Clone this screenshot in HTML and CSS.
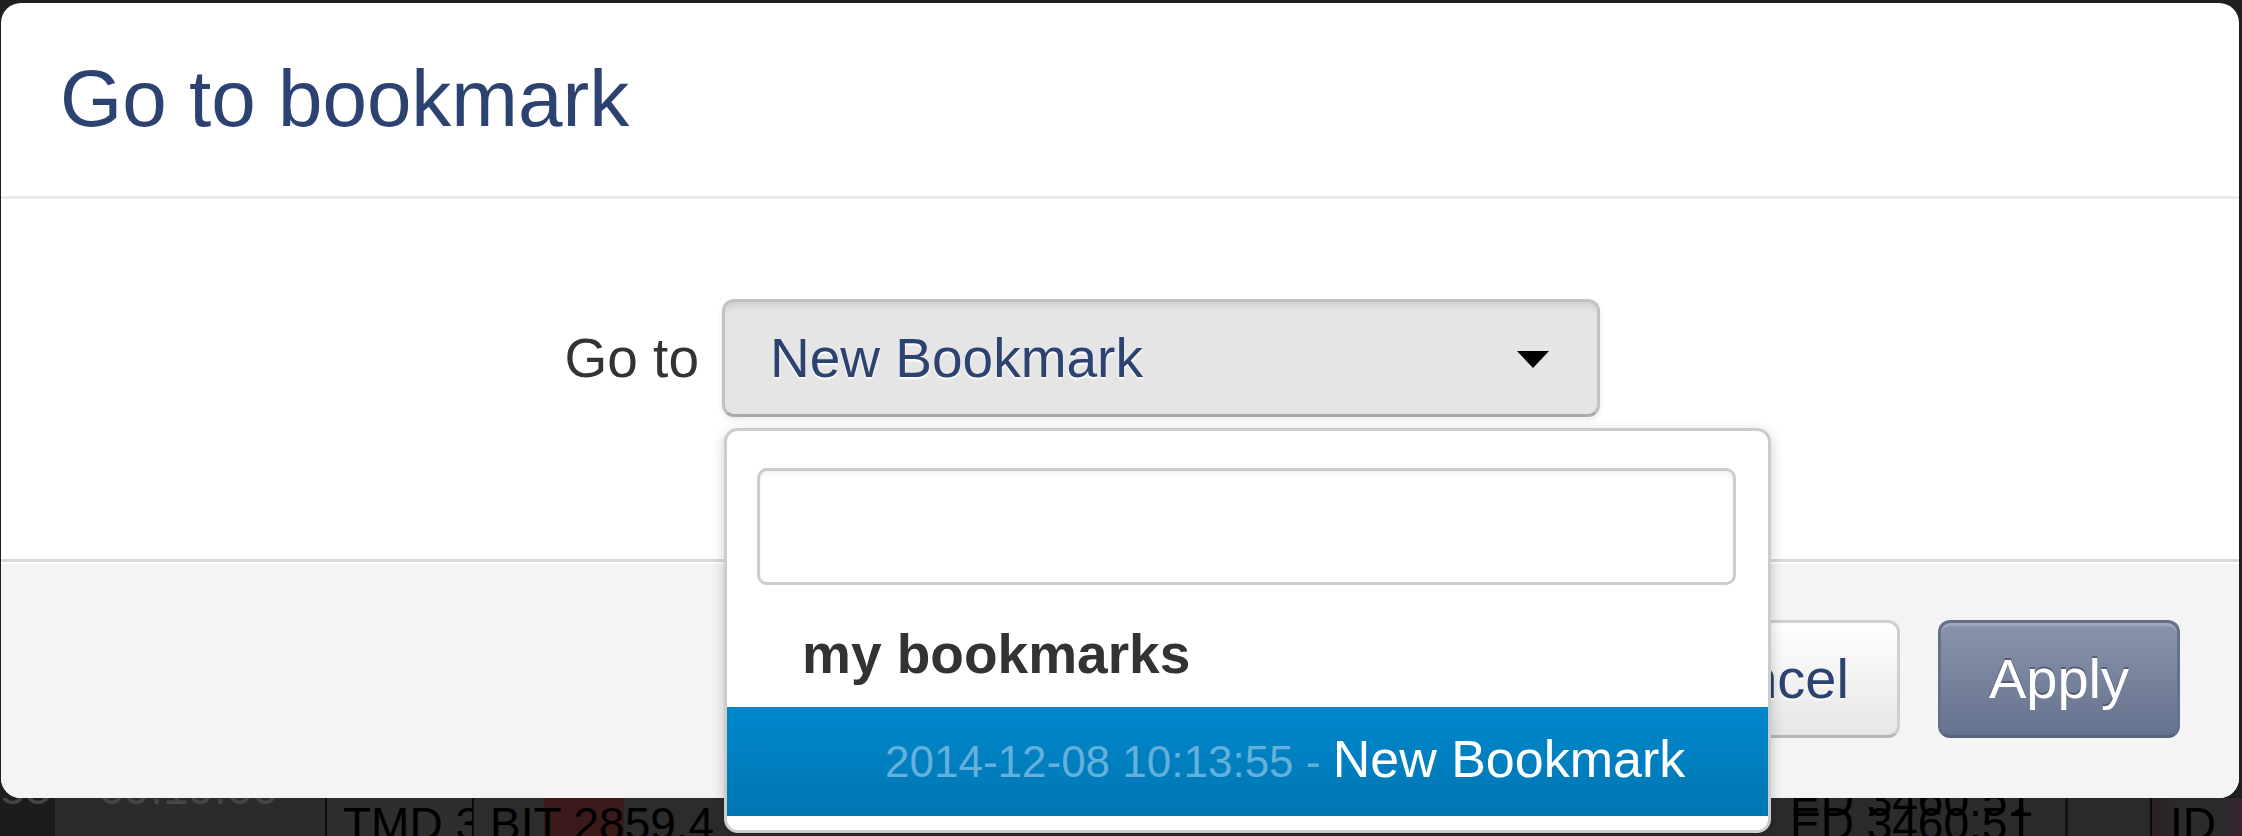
FILE: index.html
```html
<!DOCTYPE html>
<html>
<head>
<meta charset="utf-8">
<link rel="stylesheet" href="styles.css">
</head>
<body>
<div class="page">
  <div class="modal">
    <div class="modal-header">
      <h3 class="title">Go to bookmark</h3>
    </div>
    <div class="modal-body">
      <div class="form-row">
        <label class="label">Go to</label>
        <div class="select-wrap">
          <div class="select">
            <span class="select-text">New Bookmark</span>
            <span class="caret"></span>
          </div>
          <div class="dropdown">
            <div class="search"><div class="search-input"></div></div>
            <div class="group-label">my bookmarks</div>
            <div class="option highlighted"><span class="opt-date">2014-12-08 10:13:55 - </span><span class="opt-name">New Bookmark</span></div>
          </div>
        </div>
      </div>
    </div>
    <div class="modal-footer">
      <button class="btn btn-cancel">Cancel</button>
      <button class="btn btn-apply">Apply</button>
    </div>
  </div>
  <div class="app-strip">
    <div class="cell c1"><span class="faded t-up">55</span></div>
    <div class="cell c2"><span class="faded t-up">09:19:00</span></div>
    <div class="cell c3"><span class="t-down">TMD 3</span></div>
    <div class="cell c4"><span class="redbar"></span><span class="t-down">BIT 2859.4</span></div>
    <div class="cell c-under"></div>
    <div class="cell c5"><span class="t-two">ED 3460.51<br>ED 3460.51</span></div>
    <div class="cell c6"></div>
    <div class="cell c7"><span class="t-down">ID</span></div>
  </div>
</div>
</body>
</html>
```
FILE: styles.css
```css
html, body {
  margin: 0;
  padding: 0;
}
body {
  width: 2242px;
  height: 836px;
  overflow: hidden;
  background: #1f1f1f;
  font-family: "Liberation Sans", Arial, sans-serif;
}
.page {
  padding: 3px 0 0 1px;
}
.modal {
  width: 2238px;
  height: 795px;
  background: #fff;
  border-radius: 20px;
  display: flex;
  flex-direction: column;
  position: relative;
  z-index: 2;
}
.modal-header {
  height: 193px;
  border-bottom: 3px solid #ececec;
  padding: 0 59px;
  box-sizing: content-box;
}
.title {
  margin: 0;
  padding-top: 50px;
  font-size: 80px;
  font-weight: normal;
  line-height: 92px;
  color: #2c4270;
}
.modal-body {
  height: 260px;
  padding: 100px 0 0 398px;
}
.form-row {
  display: flex;
  align-items: center;
}
.label {
  width: 300px;
  margin-right: 23px;
  text-align: right;
  font-size: 55px;
  color: #333;
}
.select-wrap {
  position: relative;
}
.select {
  width: 872px;
  height: 112px;
  box-sizing: content-box;
  border: 3px solid #c2c2c2;
  border-bottom-color: #aaaaaa;
  border-radius: 12px;
  background: #e5e5e5;
  box-shadow: inset 0 10px 8px -8px rgba(0, 0, 0, 0.14), 0 3px 6px rgba(0, 0, 0, 0.08);
  display: flex;
  align-items: center;
  justify-content: space-between;
  padding: 0;
}
.select-text {
  padding-left: 45px;
  font-size: 55px;
  color: #2c4270;
  text-shadow: 0 2px 2px #fff;
}
.caret {
  width: 0;
  height: 0;
  border-left: 16px solid transparent;
  border-right: 16px solid transparent;
  border-top: 17px solid #000;
  margin-right: 48px;
  margin-top: 2px;
}
.dropdown {
  position: absolute;
  z-index: 10;
  top: 129px;
  left: 2px;
  width: 1041px;
  height: 399px;
  border: 3px solid #cccccc;
  border-radius: 14px;
  background: #fff;
  box-shadow: 0 4px 14px rgba(0, 0, 0, 0.2);
  overflow: hidden;
}
.search {
  padding: 37px 32px 0 30px;
}
.search-input {
  height: 111px;
  border: 3px solid #cccccc;
  border-radius: 10px;
  background: #fff;
  box-shadow: inset 0 3px 4px rgba(0, 0, 0, 0.05);
}
.group-label {
  margin-top: 38px;
  padding: 0 0 21px 75px;
  font-size: 55px;
  line-height: 63px;
  font-weight: bold;
  color: #333;
}
.option {
  padding: 22px 0 24px 158px;
  font-size: 52px;
  line-height: 60px;
}
.highlighted {
  background: linear-gradient(#0088cc, #0076b3);
}
.opt-date {
  font-size: 44px;
  color: #64b0db;
}
.opt-name {
  color: #fff;
}
.modal-footer {
  flex: 1;
  background: #f4f4f4;
  border-top: 3px solid #dadada;
  border-radius: 0 0 20px 20px;
  box-shadow: inset 0 2px 0 #fff;
  padding: 58px 59px 60px 0;
  display: flex;
  justify-content: flex-end;
  align-items: flex-start;
  gap: 38px;
}
.btn {
  font-family: "Liberation Sans", Arial, sans-serif;
  font-size: 56px;
  line-height: 64px;
  padding: 24px 48px;
  border-radius: 12px;
  border: 3px solid;
  margin: 0;
}
.btn-cancel {
  color: #2c4270;
  background: linear-gradient(#ffffff, #e6e6e6);
  border-color: #cfcfcf #cfcfcf #b5b5b5;
  text-shadow: 0 2px 2px rgba(255, 255, 255, 0.8);
}
.btn-apply {
  color: #fff;
  background: linear-gradient(#8993ab, #66738f);
  border-color: #66708a #66708a #59637b;
  box-shadow: inset 0 3px 0 rgba(255, 255, 255, 0.2);
  text-shadow: 0 -2px 0 rgba(0, 0, 0, 0.3);
}
.app-strip {
  display: flex;
  height: 38px;
  margin-left: -1px;
  overflow: hidden;
}
.cell {
  height: 38px;
  overflow: hidden;
  position: relative;
  font-size: 46px;
  color: #000;
  white-space: nowrap;
  box-sizing: border-box;
  flex: none;
}
.c1 { width: 55px; background: #1c1c1c; }
.c2 { width: 272px; background: #2b2b2b; border-right: 2px solid #0a0a12; padding-left: 44px; }
.c3 { width: 147px; background: #2e2e2e; border-right: 2px solid #0a0a12; padding-left: 16px; }
.c4 { width: 250px; background: #2c2c2c; padding-left: 16px; }
.c-under { width: 1047px; background: #2c2c2c; }
.c5 { width: 297px; background: #2b2b2b; border-right: 3px solid #151515; padding-left: 19px; }
.c6 { width: 84px; background: #2a2a2a; border-right: 2px solid #0a0a0a; }
.c7 { flex: 1; background: linear-gradient(90deg, #2a1f28, #2b2b2b 30%, #2b2b2b 80%, #3a2233); padding-left: 18px; }
.faded { color: #464646; }
.t-up { display: block; margin-top: -34px; line-height: 48px; }
.t-down { display: block; margin-top: 2px; line-height: 48px; position: relative; }
.redbar {
  position: absolute;
  left: 70px;
  top: 0;
  width: 80px;
  height: 38px;
  background: #3a1a1a;
}
.t-two { display: block; line-height: 24px; margin-top: -10px; }
```
